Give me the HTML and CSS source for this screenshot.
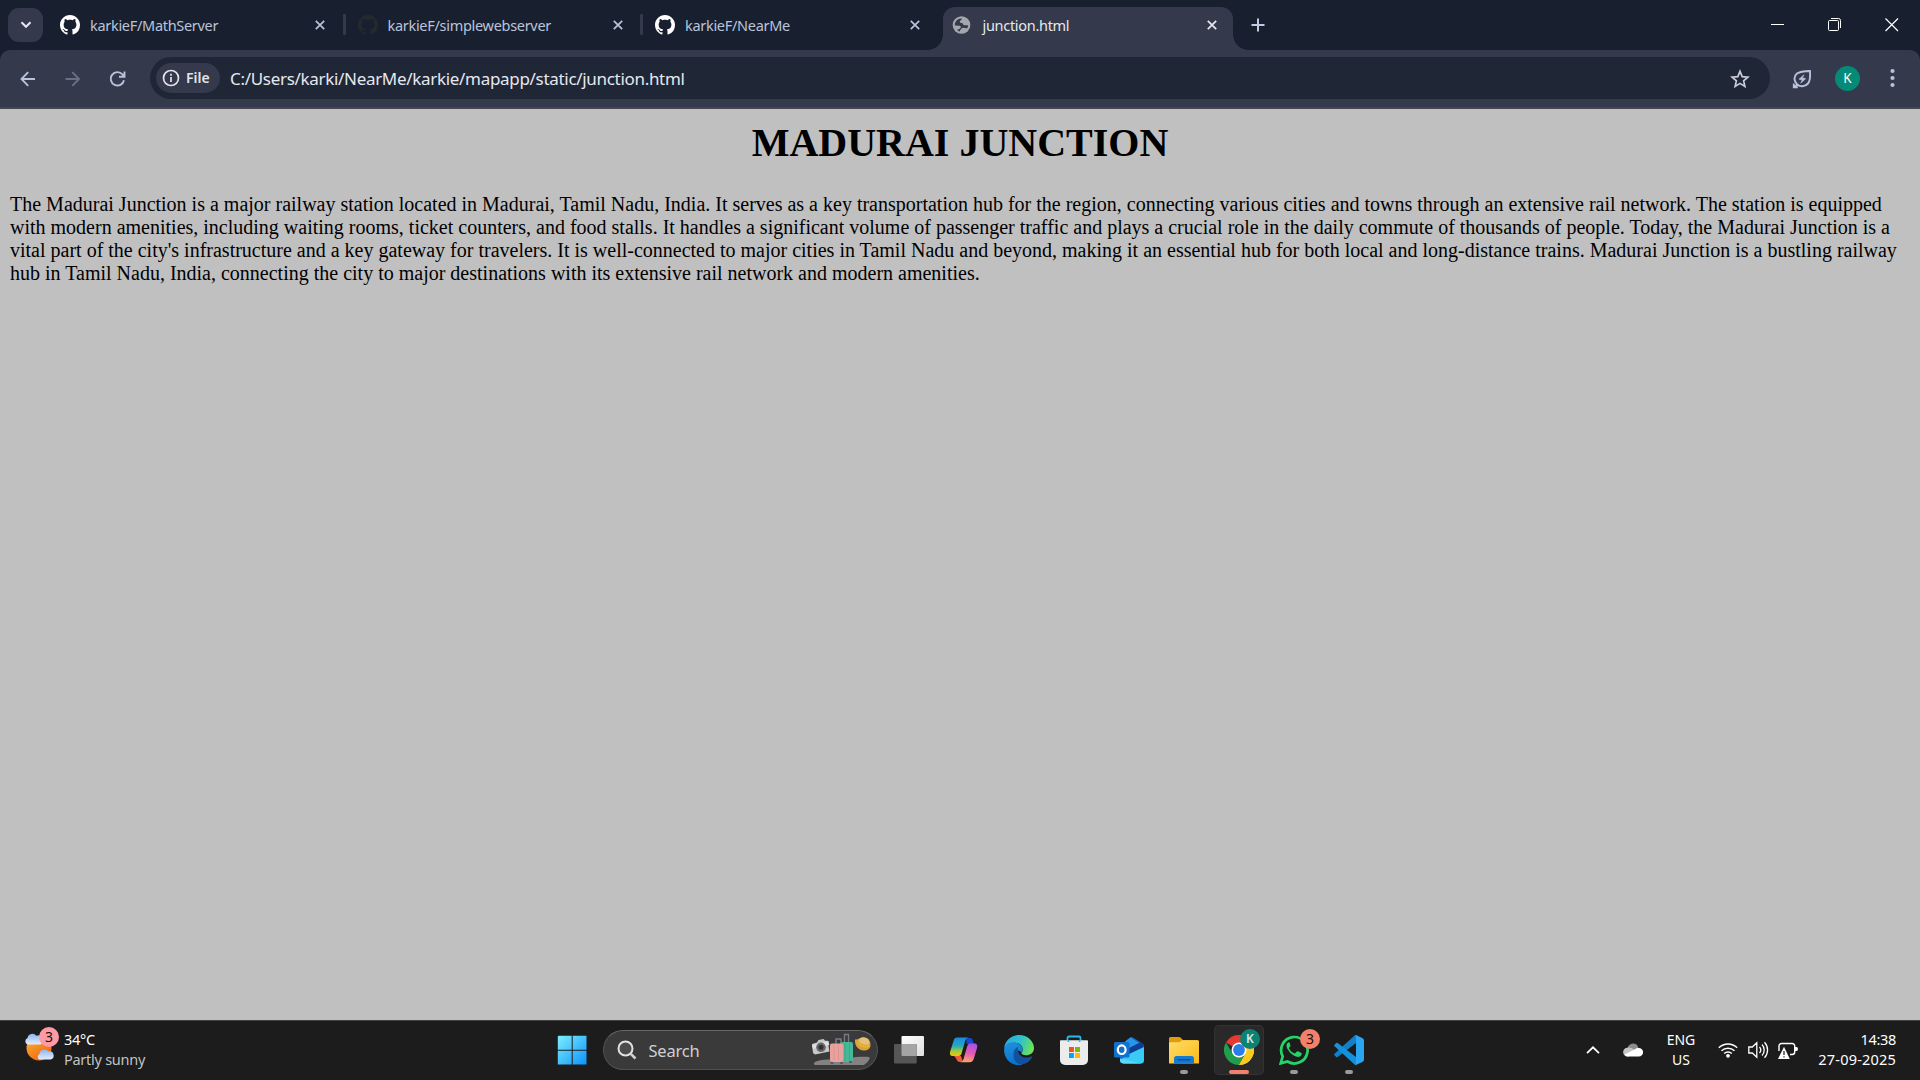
FILE: index.html
```html
<!DOCTYPE html>
<html lang="en">
<head>
<meta charset="utf-8">
<title>junction.html</title>
<link rel="stylesheet" href="styles.css">
</head>
<body>
<svg class="defs" width="0" height="0" aria-hidden="true">
  <defs>
    <symbol id="github" viewBox="0 0 16 16"><path d="M8 0C3.58 0 0 3.58 0 8c0 3.54 2.29 6.53 5.47 7.59.4.07.55-.17.55-.38 0-.19-.01-.82-.01-1.49-2.01.37-2.53-.49-2.69-.94-.09-.23-.48-.94-.82-1.13-.28-.15-.68-.52-.01-.53.63-.01 1.08.58 1.23.82.72 1.21 1.87.87 2.33.66.07-.52.28-.87.51-1.07-1.78-.2-3.64-.89-3.64-3.95 0-.87.31-1.59.82-2.15-.08-.2-.36-1.02.08-2.12 0 0 .67-.21 2.2.82.64-.18 1.32-.27 2-.27s1.36.09 2 .27c1.53-1.04 2.2-.82 2.2-.82.44 1.1.16 1.92.08 2.12.51.56.82 1.27.82 2.15 0 3.07-1.87 3.75-3.65 3.95.29.25.54.73.54 1.48 0 1.07-.01 1.93-.01 2.2 0 .21.15.46.55.38A8.01 8.01 0 0 0 16 8c0-4.42-3.58-8-8-8z"/></symbol>
    <symbol id="close" viewBox="0 0 10 10"><path d="M.8.8l8.4 8.4M9.2.8L.8 9.2" fill="none" stroke="currentColor" stroke-width="1.7"/></symbol>
  </defs>
</svg>

<header class="browser">
  <div class="tabstrip">
    <button class="tab-search"><svg width="12" height="8" viewBox="0 0 12 8"><path d="M1.5 1.3L6 5.8l4.500-4.500" fill="none" stroke="#e6e8f2" stroke-width="2"/></svg></button>
    <div class="tabs">
      <div class="tab"><svg class="favicon" fill="#fff"><use href="#github"/></svg><span class="label">karkieF/MathServer</span><svg class="close"><use href="#close"/></svg></div>
      <div class="tab divided"><svg class="favicon" fill="#24292e"><use href="#github"/></svg><span class="label">karkieF/simplewebserver</span><svg class="close"><use href="#close"/></svg></div>
      <div class="tab divided"><svg class="favicon" fill="#fff"><use href="#github"/></svg><span class="label">karkieF/NearMe</span><svg class="close"><use href="#close"/></svg></div>
      <div class="tab active"><svg class="favicon" viewBox="0 0 20 20"><circle cx="10" cy="10" r="9.300" fill="#a3a8ac"/><path d="M3 8.500C4 5 7 3 10.500 3.200 11 4.500 8.500 4.800 8.300 6.500c-.1 1.500 1.700 1.200 2.700 1.700.9.500.5 1.700 1.500 2 1.500.4 3-.2 4.600.4-.2 1-.6 2-1.200 2.900-1.400-.5-2.800-.7-4.500-.7-1.500.2-1.300 1.500-2.400 2.200-.6.500-.7 1-.6 1.800-1.500-.4-2.400-1-3.300-1.900 1.900.1 3.100-.8 4-1.900.7-1-.1-2.200-1.600-2.300L3 10.500z" fill="#343a4b"/></svg><span class="label">junction.html</span><svg class="close"><use href="#close"/></svg></div>
    </div>
    <svg class="new-tab" width="14" height="14" viewBox="0 0 14 14"><path d="M7 .5v13M.5 7h13" stroke="#c3cae3" stroke-width="2"/></svg>
    <div class="window-controls">
      <svg width="14" height="14" viewBox="0 0 14 14"><path d="M0 6.500h13" stroke="#fff"/></svg>
      <svg width="14" height="14" viewBox="0 0 14 14"><path d="M.5 3.500a1 1 0 0 1 1-1h8a1 1 0 0 1 1 1v8a1 1 0 0 1-1 1h-8a1 1 0 0 1-1-1zM3 .5h7.500a2 2 0 0 1 2 2V10" fill="none" stroke="#fff"/></svg>
      <svg width="14" height="14" viewBox="0 0 14 14"><path d="M.5.5l12.500 12.500M13 .5L.5 13" stroke="#fff" stroke-width="1.200"/></svg>
    </div>
  </div>

  <div class="toolbar">
    <nav class="nav">
      <svg width="16" height="16" viewBox="0 0 16 16"><path d="M15 8H1.800M8.200 1.200L1.500 8l6.700 6.800" fill="none" stroke="#b9c2dd" stroke-width="1.900"/></svg>
      <svg width="16" height="16" viewBox="0 0 16 16"><path d="M.5 8h13.200M7.300 1.200L14 8l-6.700 6.800" fill="none" stroke="#697084" stroke-width="1.900"/></svg>
      <svg width="16" height="16" viewBox="0 0 16 16"><path d="M14 9.300A6.700 6.700 0 1 1 12.500 3.400l1.500 2M14.500.5v5.300H9" fill="none" stroke="#b9c2dd" stroke-width="1.900"/></svg>
    </nav>
    <div class="omnibox">
      <div class="chip"><svg width="18" height="18" viewBox="0 0 18 18"><circle cx="9" cy="9" r="7.500" fill="none" stroke="#e3e3ea" stroke-width="1.700"/><path d="M9 8v5M9 4.800v1.900" stroke="#e3e3ea" stroke-width="1.700"/></svg><span>File</span></div>
      <span class="url">C:/Users/karki/NearMe/karkie/mapapp/static/junction.html</span>
      <svg class="star" width="20" height="20" viewBox="0 0 20 20"><path d="M10 2.300l2.200 5.300 5.700.5-4.300 3.700 1.300 5.600-4.900-3-4.900 3 1.300-5.600L2.100 8.100l5.700-.5z" fill="none" stroke="#c9cbd6" stroke-width="1.700"/></svg>
    </div>
    <svg class="leaf" width="20" height="20" viewBox="0 0 20 20"><path d="M18 2c.4 6 .2 10-2 12.500-3 3.500-8 3.600-10.700 1C1.500 12 1.500 7.500 5 4.600 8 2.200 12 2.100 18 2zM5.300 15.500L2 18.300M1.800 14.500v3.700h4" fill="none" stroke="#b9c2dd" stroke-width="1.900"/><path d="M12 5.800L7 10.200l3.200.9-1.500 3.100 5-4.500-3.200-1z" fill="#b9c2dd" stroke="#b9c2dd" stroke-width=".6"/></svg>
    <span class="avatar">K</span>
    <svg class="menu" width="5" height="20" viewBox="0 0 5 20" fill="#b9c2dd"><circle cx="2.500" cy="3" r="2.100"/><circle cx="2.500" cy="10" r="2.100"/><circle cx="2.500" cy="17" r="2.100"/></svg>
  </div>
</header>

<main class="page">
  <h1>MADURAI JUNCTION</h1>
  <p>The Madurai Junction is a major railway station located in Madurai, Tamil Nadu, India. It serves as a key transportation hub for the region, connecting various cities and towns through an extensive rail network. The station is equipped with modern amenities, including waiting rooms, ticket counters, and food stalls. It handles a significant volume of passenger traffic and plays a crucial role in the daily commute of thousands of people. Today, the Madurai Junction is a vital part of the city's infrastructure and a key gateway for travelers. It is well-connected to major cities in Tamil Nadu and beyond, making it an essential hub for both local and long-distance trains. Madurai Junction is a bustling railway hub in Tamil Nadu, India, connecting the city to major destinations with its extensive rail network and modern amenities.</p>
</main>

<footer class="taskbar">
  <div class="weather">
    <div class="weather-icon">
      <svg width="30" height="30" viewBox="0 0 30 30">
        <defs>
          <linearGradient id="sun" x1="0" y1="0" x2=".7" y2="1"><stop offset="0" stop-color="#f8b93a"/><stop offset="1" stop-color="#f1640f"/></linearGradient>
          <linearGradient id="cloud" x1="0" y1="0" x2="0" y2="1"><stop offset="0" stop-color="#8fb4ee"/><stop offset="1" stop-color="#e4edfc"/></linearGradient>
        </defs>
        <circle cx="15" cy="15" r="12.500" fill="url(#sun)"/>
        <path d="M3.500 11.500a3.500 3.500 0 0 1 0-6.500A5 5 0 0 1 12.500 3a4 4 0 0 1 4 8.500z" fill="url(#cloud)"/>
        <path d="M15.500 26.500a3 3 0 0 1 0-5.500 5 5 0 0 1 9-2.500 4 4 0 0 1 2 8z" fill="url(#cloud)"/>
      </svg>
      <span class="badge pink">3</span>
    </div>
    <div class="weather-text"><span>34°C</span><span class="muted">Partly sunny</span></div>
  </div>

  <div class="apps">
    <div class="app"><svg width="30" height="30" viewBox="0 0 30 30"><defs><linearGradient id="win" gradientUnits="userSpaceOnUse" x1="1" y1="1" x2="29" y2="29"><stop offset="0" stop-color="#7beefd"/><stop offset="1" stop-color="#0f94fb"/></linearGradient></defs><path d="M1.500.8H14.700v13.900H.8V1.500zM15.700.8H29.500v13.900H15.700zM.8 15.700h13.900v13.800H.8zM15.700 15.700h13.800v13.800H15.700z" fill="url(#win)"/></svg></div>
    <div class="search">
      <svg width="20" height="20" viewBox="0 0 20 20"><circle cx="8.500" cy="8.500" r="7" fill="#4b4b4b" stroke="#dfe1e3" stroke-width="2"/><path d="M13.800 13.800l4.700 4.700" stroke="#cfd2d4" stroke-width="2.600"/></svg>
      <span>Search</span>
      <svg class="travel" width="62" height="34" viewBox="0 0 62 34">
        <path d="M5 32c-3-2 0-5 14-5.500 14-.5 30-3.500 40-2.500 2 1-1 5-5 8z" fill="#858181"/>
        <path d="M2 11l5-1.500 1.500-2.500 5-1 2 2 2-.5 2 11L5 21.500 3 20z" fill="#c8c8c8"/><path d="M2 12l16.500-4 .8 4L3 16z" fill="#e0e0e0"/><circle cx="11" cy="14.300" r="4.800" fill="#666"/><circle cx="11" cy="14.300" r="2.500" fill="#303238"/>
        <path d="M34.500 9V1.500h4V9" fill="none" stroke="#777b86" stroke-width="1.400"/><rect x="30" y="9" width="13" height="20" rx="2" fill="#45b899"/><path d="M35 10v18M39.500 10v18" stroke="#3aa98b"/>
        <path d="M26 11V6h5v5" fill="none" stroke="#777b86" stroke-width="1.500"/><rect x="20" y="10.500" width="13.500" height="18.500" rx="2" fill="#e8a29d"/><path d="M24 12v15M28.500 12v15" stroke="#db938e"/>
        <path d="M22 29v2M31.500 29v2M40.500 28v2" stroke="#4e5676" stroke-width="2.500"/>
        <path d="M45 6.500C48 7 50 4.500 53 4.500c5 0 8 4 7.500 8-.5 4-4 5.500-7.500 5-5.500-1-8.500-5.500-8-11z" fill="#d7a13e"/><path d="M48.500 8c1-4 5-4.500 8-3 3 1.500 3.500 4 2.500 6.500-3 1-8 0-10.500-3.500z" fill="#e6c078"/><path d="M47.500 8c2 4 7 6 12 4v2c-5 1.500-10 0-12-4z" fill="#eeb622"/>
      </svg>
    </div>
    <div class="app"><svg width="30" height="30" viewBox="0 0 30 30"><defs><linearGradient id="tv" x1="0" y1="0" x2="1" y2="1"><stop offset="0" stop-color="#fff"/><stop offset="1" stop-color="#dedede"/></linearGradient></defs><rect x="7.500" y="1" width="22.500" height="20" rx="1" fill="url(#tv)"/><rect x="0" y="9" width="22.700" height="19.500" rx="1" fill="#565656"/><path d="M7.500 9h15.200v12H8.500a1 1 0 0 1-1-1z" fill="#a5a5a5"/></svg></div>
    <div class="app"><svg width="30" height="30" viewBox="0 0 30 30"><defs>
      <linearGradient id="cpl" x1="0" y1="0" x2="0" y2="1"><stop offset="0" stop-color="#178be5"/><stop offset=".45" stop-color="#26a8bd"/><stop offset=".75" stop-color="#a4cd35"/><stop offset="1" stop-color="#f5c20f"/></linearGradient>
      <linearGradient id="cpr" x1=".5" y1="0" x2=".3" y2="1"><stop offset="0" stop-color="#a653e6"/><stop offset=".5" stop-color="#e65bb0"/><stop offset="1" stop-color="#fdaa63"/></linearGradient></defs>
      <path d="M17 3h4c2 0 2.500 1.500 3 3l.8 3h-7z" fill="#1748cf"/><path d="M5 21h7l2 6h-3c-2 0-3-1-3.500-3z" fill="#ef5b37"/><path d="M8 2.500h11.500c-2 .5-3 2-3.500 4l-3.500 12c-.5 2-2 2.500-3.500 2.500H4c-3 0-3.500-2-2.800-4.500L4.500 6C5 4 6 2.500 8 2.500z" fill="url(#cpl)"/><path d="M21 8.500h4c3 0 3.800 2 3 4.500l-3 10c-.8 3-2 4.300-4.500 4.300H11c2 0 3-1.500 3.500-3.300l3.500-12c.5-2.200 1.500-3.500 3-3.500z" fill="url(#cpr)"/></svg></div>
    <div class="app"><svg width="30" height="30" viewBox="0 0 30 30"><defs>
      <linearGradient id="eg" x1="0" y1=".3" x2="1" y2=".6"><stop offset="0" stop-color="#29a9df"/><stop offset=".5" stop-color="#2cc3ce"/><stop offset="1" stop-color="#71e350"/></linearGradient>
      <linearGradient id="eb" x1="0" y1="0" x2=".3" y2="1"><stop offset="0" stop-color="#2392dc"/><stop offset="1" stop-color="#0873cf"/></linearGradient></defs>
      <path d="M.2 13C1 5.500 7.500 0 15 0c8.500 0 15 6.300 15 13 0 5-4 7.300-8 7.300-3.300 0-5.200-1.300-4.300-2.600 2.200-3 1-8.700-5.200-9.700C7 7.200 2.800 8.800.2 13z" fill="url(#eg)"/>
      <path d="M.1 15C.1 10 4 7.300 9 7.300c5 0 9.500 3.200 9.500 7.200 0 1.800-.6 2.700-1 3.400-2-3.500-6-3.200-7.200.6-1.500 5 2.500 9.500 8.500 11C9 32.500.1 25 .1 15z" fill="url(#eb)"/>
      <path d="M9.500 20c0-4 2-7.500 4.500-8-1.500 6 3 10.600 8.500 10.600 2 0 3.500-.5 5-1 .5-.2.900.1.600.7-1.500 3.500-6 7-10.500 7-5 0-8.100-4-8.100-9.300z" fill="#11519d"/></svg></div>
    <div class="app"><svg width="30" height="30" viewBox="0 0 30 30"><path d="M8.500 6V3a1.500 1.500 0 0 1 1.500-1.500h10A1.500 1.500 0 0 1 21.500 3v3" fill="none" stroke="#2bb8ec" stroke-width="1.800"/><path d="M1 6q0-.7.800-.7h26.400q.8 0 .8.700v19a5 5 0 0 1-5 5H6a5 5 0 0 1-5-5z" fill="#ececec"/><path d="M8.500 5h1.800v2H8.500zM19.800 5h1.700v2h-1.700z" fill="#2bb8ec"/><path d="M10 12h4.900v5H10z" fill="#f25022"/><path d="M16 12h5v5h-5z" fill="#7fba00"/><path d="M10 18h4.900v5H10z" fill="#00a4ef"/><path d="M16 18h5v5h-5z" fill="#ffb900"/></svg></div>
    <div class="app"><svg width="30" height="30" viewBox="0 0 30 30"><path d="M6 10.500L16 2.600q1.500-1 3 0L29 9q1 .8 1 2v14a3.500 3.500 0 0 1-3.500 3.500h-17A3.500 3.500 0 0 1 6 25z" fill="#1268c4"/><path d="M8 9l8.500-6.500L25 8l-10 6z" fill="#2497ed"/><path d="M11 15L26.500 7.200 29.500 9.500v4L15 21z" fill="#103d94"/><path d="M15 19l15-7v13a3.500 3.500 0 0 1-3.500 3.500h-17Q6 28 6 25z" fill="#3acbf5"/><path d="M6 23.500l21.500 5H9.500Q6 28 6 25z" fill="#58d8fb"/><rect x="0" y="7" width="15.500" height="15.500" rx="1.500" fill="#1370ce"/><ellipse cx="7.700" cy="14.700" rx="3.900" ry="4.300" fill="none" stroke="#fff" stroke-width="2.200"/></svg></div>
    <div class="app running"><svg width="30" height="30" viewBox="0 0 30 30"><defs><linearGradient id="fold" x1="0" y1="0" x2="1" y2="1"><stop offset="0" stop-color="#ffdd6b"/><stop offset="1" stop-color="#fab915"/></linearGradient></defs><path d="M0 8V3.500Q0 2 1.500 2H10q1 0 1.700.7L14 5h13.500Q30 5 30 7v2z" fill="#e29c0b"/><path d="M0 8q0-.8.800-.8H10q.8 0 1.500-.6L13 5.300h15.500q1.500 0 1.500 1.500V28.500H0z" fill="url(#fold)"/><path d="M5 28.500V23.500a2.500 2.500 0 0 1 2.500-2.500h15a2.500 2.500 0 0 1 2.500 2.500v5z" fill="#157bd2"/><path d="M9 24.700h12" stroke="#0b529a" stroke-width="1.500" stroke-linecap="round"/></svg></div>
    <div class="app running current"><svg width="30" height="30" viewBox="0 0 30 30"><path d="M15 15L2 7.500A15 15 0 0 1 28 7.500L28 8H15z" fill="#e63a31"/><path d="M15 22L28 7.500A15 15 0 0 1 15 30L21.500 18.500z" fill="#fcc920"/><path d="M2 7.500L8.500 18.500 15 22l4.500-.5L15 30A15 15 0 0 1 2 7.500z" fill="#229c4d"/><path d="M15 8h13a15 15 0 0 1 0 14.500A15 15 0 0 1 15 30l6.500-11.500z" fill="#fcc920"/><circle cx="15" cy="15" r="7.500" fill="#fff"/><circle cx="15" cy="15" r="5.900" fill="#2b7de9"/></svg><span class="badge teal">K</span></div>
    <div class="app running"><svg width="30" height="30" viewBox="0 0 30 30"><path d="M1.700 28.400l2-7A13.200 13.200 0 1 1 8.500 26.500z" fill="none" stroke="#25d366" stroke-width="2.700"/><path d="M10.700 7.700c-.5-1-1.700-.5-2.400.5-1.500 2-.8 4.500 1 7 2.300 3.500 5.500 5.800 8.700 6.600 2.500.6 4.500-.8 4.700-3 .1-.6-.2-.8-.7-1l-3-1.500c-.6-.3-1-.1-1.400.4l-1.200 1.400c-.3.400-.7.400-1.200.2-2.200-1-3.900-2.500-5-4.500-.3-.5-.2-.8.100-1.200l1-1.300c.3-.4.200-.7 0-1.200z" fill="#25d366"/></svg><span class="badge orange">3</span></div>
    <div class="app running"><svg width="30" height="30" viewBox="0 0 30 30"><path d="M22 0L22 8 3.700 22q-.8.600-1.500 0L.5 20.300q-.8-.8 0-1.600L20.300.8z" fill="#1180c8"/><path d="M22 30v-8L3.700 8q-.8-.6-1.500 0L.5 9.700q-.8.800 0 1.600l19.800 17.900z" fill="#1590da"/><path d="M20.300.8Q21.200-.2 22.500.2L28.700 3.200Q30 4 30 5.300v19.400q0 1.300-1.300 2.100l-6.200 3q-1.300.4-2.200-.6 1.700 1 1.700-1.200V2Q22-.2 20.300.8z" fill="#2aa5f2"/></svg></div>
  </div>

  <div class="tray">
    <svg class="chevron" width="14" height="8" viewBox="0 0 14 8"><path d="M1 7.200L7 1.300l6 5.900" fill="none" stroke="#fff" stroke-width="1.700"/></svg>
    <svg class="onedrive" width="20" height="14" viewBox="0 0 20 14"><path d="M4.500 5C6-.3 14-1.500 15.500 5l-5 4z" fill="#8c8c8c"/><path d="M4.500 13.500a4.400 4.400 0 0 1 0-8.800c2-.6 4.500.3 6.500 2L18 11z" fill="#c4c4c4"/><path d="M1.500 11.500L12 6.200c1.300-1 2.500-1.200 3.800-1.200a4.200 4.200 0 0 1 0 8.500H4.500a4 4 0 0 1-3-2z" fill="#fff"/></svg>
    <div class="lang"><span>ENG</span><span>US</span></div>
    <div class="status">
      <svg width="20" height="16" viewBox="0 0 20 16"><path d="M.8 5.800a13.200 13.200 0 0 1 18.400 0M3.500 8.800a9.300 9.300 0 0 1 13 0M6.200 11.500a5.400 5.400 0 0 1 7.600 0" fill="none" stroke="#fff" stroke-width="1.500"/><circle cx="10" cy="13.800" r="1.900" fill="#fff"/></svg>
      <svg width="21" height="18" viewBox="0 0 21 18"><path d="M.8 6h3.500l4.500-4.300v14.600L4.300 12H.8zM11.500 6a4.500 4.500 0 0 1 0 6M14 3.500a8 8 0 0 1 0 11M16.500 1.200a11.500 11.500 0 0 1 0 15.600" fill="none" stroke="#fff" stroke-width="1.300"/></svg>
      <svg width="21" height="17" viewBox="0 0 21 17"><path d="M1 9V4a2.500 2.500 0 0 1 2.500-2.500h10.700A2.500 2.500 0 0 1 16.700 4v6a2.500 2.500 0 0 1-2.500 2.500H12" fill="none" stroke="#fff" stroke-width="1.400"/><path d="M17 5h1.500q1.500 0 1.500 2t-1.500 2H17z" fill="#fff"/><path d="M6 4.800l5.800 12.200H0z" fill="#fff"/><path d="M6 9v4M6 14.200v1.400" stroke="#1c1c1c" stroke-width="1.200"/></svg>
    </div>
    <div class="clock"><span class="time">14:38</span><span class="date">27-09-2025</span></div>
  </div>
</footer>
</body>
</html>
```
FILE: styles.css
```css
* { box-sizing: border-box; }

body {
  margin: 0;
  width: 1920px;
  height: 1080px;
  overflow: hidden;
  display: flex;
  flex-direction: column;
  background: #c0c0c0;
  font-family: "Noto Sans", "Open Sans", sans-serif;
}

svg { display: block; flex: none; }
.defs { position: absolute; }

/* Browser frame */
.browser { flex: none; background: #182030; }

.tabstrip {
  height: 50px;
  display: flex;
  align-items: center;
  padding-left: 8px;
}

.tab-search {
  width: 35px;
  height: 34px;
  border: 0;
  padding: 0;
  border-radius: 11px;
  background: #343a4b;
  display: grid;
  place-items: center;
}

.tabs {
  display: flex;
  gap: 7.5px;
  margin-left: 7px;
  align-self: stretch;
}

.tab {
  position: relative;
  width: 290px;
  margin-top: 7px;
  padding: 0 15px 7px 10px;
  display: flex;
  align-items: center;
  color: #bbc3da;
  font-size: 14.5px;
  letter-spacing: -0.3px;
}

.favicon { width: 20px; height: 20px; }
.close { width: 10px; height: 10px; }
.label { flex: 1; margin-left: 10px; line-height: 20px; }

.divided::before {
  content: "";
  position: absolute;
  left: -5px;
  top: 7px;
  width: 3px;
  height: 21px;
  border-radius: 1px;
  background: #343a4b;
}

.active {
  padding-right: 16px;
  background: #343a4b;
  border-radius: 12px 12px 0 0;
  color: #e6e8f0;
}

.active .favicon { width: 19px; margin: 0 1.5px 0 -0.5px; }

.active::before,
.active::after {
  content: "";
  position: absolute;
  bottom: 0;
  width: 15px;
  height: 15px;
}

.active::before {
  right: 100%;
  background: radial-gradient(circle at 0 0, transparent 14.5px, #343a4b 15px);
}

.active::after {
  left: 100%;
  background: radial-gradient(circle at 100% 0, transparent 14.5px, #343a4b 15px);
}

.new-tab { margin-left: 18.5px; }

.window-controls {
  display: flex;
  gap: 43px;
  margin-left: auto;
  margin-right: 21.5px;
  padding-bottom: 1px;
}

.toolbar {
  height: 59px;
  display: flex;
  align-items: center;
  padding-bottom: 1px;
  background: #343a4b;
  border-bottom: 2px solid #464653;
  border-radius: 10px 10px 0 0;
}

.nav { display: flex; gap: 29px; margin-left: 20px; padding-top: 1px; }

.omnibox {
  width: 1620px;
  height: 42px;
  margin-left: 24px;
  padding: 0 20px 0 6px;
  border-radius: 21px;
  background: #1f2636;
  display: flex;
  align-items: center;
}

.chip {
  width: 64px;
  height: 30px;
  padding-left: 6px;
  border-radius: 15px;
  background: #343a4b;
  color: #e3e3ea;
  display: flex;
  align-items: center;
  gap: 6px;
  font-size: 14px;
  font-weight: 600;
  line-height: 20px;
}

.url {
  flex: 1;
  margin-left: 10px;
  padding-top: 2px;
  color: #e6e8f0;
  font-size: 17px;
  line-height: 24px;
  letter-spacing: -0.31px;
}

.star { margin-top: 1px; }
.leaf { margin: 1px 0 0 22px; }

.avatar {
  width: 25px;
  height: 25px;
  margin-left: 23px;
  border-radius: 50%;
  background: #058a78;
  color: #fff;
  display: grid;
  place-items: center;
  font-size: 13.5px;
  line-height: 25px;
}

.menu { margin-left: 30px; }

/* Document */
.page {
  flex: 1;
  padding: 11px 10px 0;
  color: #000;
  font: 20px/23px "Liberation Serif", "Times New Roman", serif;
}

.page h1 {
  margin: 0 0 27px;
  font-size: 40px;
  line-height: 46px;
  text-align: center;
}

.page p { margin: 0; }

/* Taskbar */
.taskbar {
  flex: none;
  height: 60px;
  display: grid;
  grid-template-columns: 545px 829px 1fr;
  padding-bottom: 1px;
  background: #1c1c1c;
  border-top: 1px solid #414342;
  color: #fff;
  font-size: 14.5px;
  line-height: 20px;
}

.weather { display: flex; gap: 9px; padding: 8px 0 0 25px; }
.weather-icon { position: relative; width: 30px; padding-top: 4px; }
.weather-icon svg { margin-left: -1px; }
.weather-text { display: flex; flex-direction: column; letter-spacing: -0.27px; }
.muted { color: #c2c2c2; }

.badge {
  position: absolute;
  width: 20px;
  height: 20px;
  border-radius: 50%;
  display: grid;
  place-items: center;
  font-size: 14px;
  line-height: 20px;
  color: #111;
}

.pink { left: 14px; top: -2px; background: #ff99a4; }
.orange { right: -1px; top: 4px; background: #f3806a; }
.teal { right: 4px; top: 4px; background: #0d8273; color: #d5ece8; font-size: 12px; font-weight: 600; }

.apps { display: flex; align-items: center; }

.app {
  position: relative;
  flex: none;
  width: 50px;
  height: 50px;
  margin-right: 5px;
  border-radius: 5px;
  display: grid;
  place-items: center;
}

.app:first-child { width: 54px; margin-right: 4px; }

.running::after {
  content: "";
  position: absolute;
  left: 21px;
  bottom: 1px;
  width: 8px;
  height: 4px;
  border-radius: 2px;
  background: #9a9a9a;
}

.current { background: #292929; box-shadow: inset 0 0 0 1px #333; }
.current::after { left: 15px; width: 20px; background: #f3806a; }

.search {
  flex: none;
  width: 275px;
  height: 40px;
  margin-right: 6px;
  padding: 0 5px 0 13px;
  border: 1px solid #515151;
  border-top-color: #686868;
  border-radius: 20px;
  background: #3a3a3a;
  display: flex;
  align-items: center;
  color: #d0d0d0;
  font-size: 16.5px;
  letter-spacing: -0.2px;
}

.search span { margin-left: 11.5px; padding-top: 1px; }
.travel { margin-left: auto; }

.tray { position: relative; display: flex; align-items: center; padding-right: 24px; }
.chevron { margin-left: 212px; }
.onedrive { margin-left: 23px; }

.lang,
.clock { display: flex; flex-direction: column; }

.lang { width: 40px; margin-left: 18px; align-items: center; font-size: 14px; }
.status { display: flex; align-items: center; gap: 9.5px; margin-left: 17px; }
.clock { margin-left: auto; align-items: flex-end; padding: 0 0 3px; }
.time { letter-spacing: -0.3px; }
.date { letter-spacing: 0.2px; }
```
